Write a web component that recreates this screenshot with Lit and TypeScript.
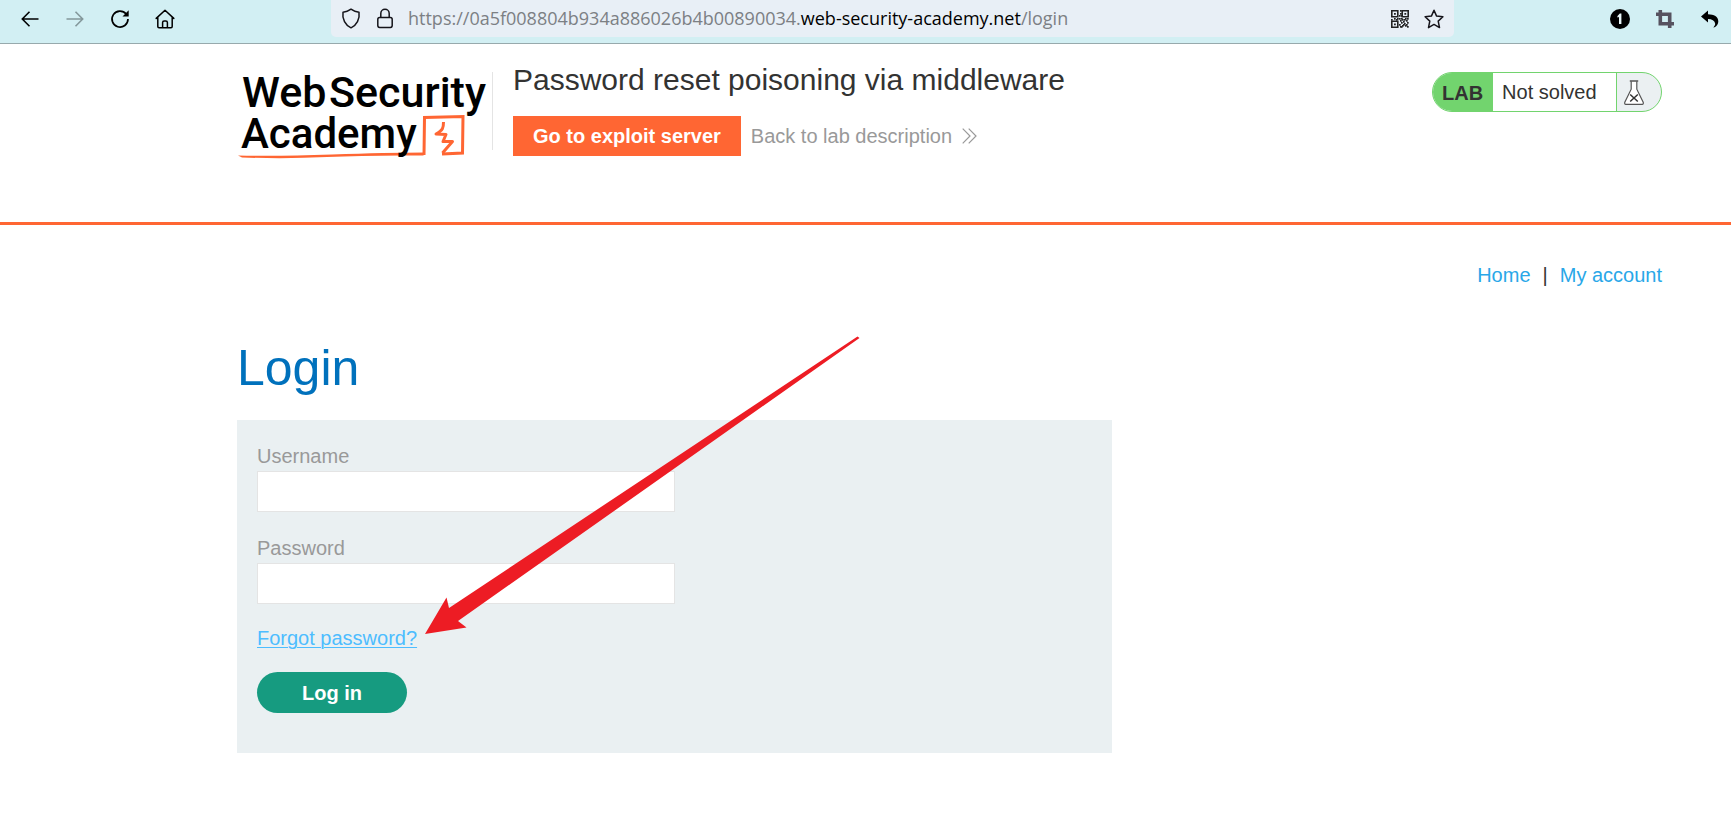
import { LitElement, html, css, svg } from "lit";
import { customElement } from "lit/decorators.js";

@customElement("browser-toolbar")
export class BrowserToolbar extends LitElement {
  static styles = css`
    :host {
      display: block;
      font-family: "Open Sans", "Noto Sans", sans-serif;
    }
    .bar {
      display: flex;
      align-items: flex-start;
      justify-content: space-between;
      gap: 150px;
      height: 43px;
      padding: 0 5px 0 14px;
      background: #d2eff3;
      border-bottom: 1px solid #97a9ac;
    }
    .group {
      display: flex;
      gap: 13px;
    }
    .tool {
      display: grid;
      place-items: center;
      width: 32px;
      height: 37px;
      padding: 0;
      border: 0;
      background: none;
      color: #000;
    }
    .tool:disabled {
      color: #84989b;
    }
    .address {
      flex: 1;
      min-width: 0;
      display: flex;
      align-items: center;
      gap: 13px;
      height: 37px;
      padding: 0 10px 0 9px;
      box-sizing: border-box;
      border-radius: 0 0 5px 5px;
      background: #e8eff6;
    }
    .mini {
      display: grid;
      place-items: center;
      flex: none;
      width: 21px;
      height: 37px;
      padding: 0;
      border: 0;
      background: none;
      color: #15141a;
    }
    .url {
      flex: 1;
      min-width: 0;
      overflow: hidden;
      white-space: nowrap;
      font-size: 18px;
      line-height: 37px;
      color: #7c8084;
    }
    .host {
      color: #000;
    }
  `;

  private qr() {
    const dots = [
      [9, 0], [9, 3], [10, 5], [8, 5], [0, 9], [3, 8], [6, 8], [8, 8], [10, 8], [13, 9], [16, 8],
      [9, 10], [12, 11], [15, 10], [10, 12], [13, 13], [16, 12], [8, 14], [11, 15], [14, 15], [16, 16], [9, 16],
      [5, 9], [11, 9], [14, 8], [12, 14], [10, 16], [15, 14],
    ];
    return html`<svg width="18" height="18" viewBox="0 0 18 18" fill="none" stroke="#222" stroke-width="1.6">
      <path d="M.8.8h6v6h-6zM11.2.8h6v6h-6zM.8 11.2h6v6h-6z" />
      <path d="M3 3h1.8v1.8H3zM13.4 3h1.8v1.8h-1.8zM3 13.4h1.8v1.8H3z" fill="#222" stroke="none" />
      ${dots.map(([x, y]) => svg`<rect x=${x} y=${y} width="1.7" height="1.7" fill="#222" stroke="none" />`)}
    </svg>`;
  }

  render() {
    return html`
      <div class="bar">
        <nav class="group" aria-label="Navigation">
          <button class="tool" aria-label="Back">
            <svg width="18" height="18" viewBox="0 0 18 18" fill="none" stroke="currentColor" stroke-width="1.6">
              <path d="M17.5 9H1.5M8.5 1.8L1.3 9l7.2 7.2" />
            </svg>
          </button>
          <button class="tool" aria-label="Forward" disabled>
            <svg width="18" height="18" viewBox="0 0 18 18" fill="none" stroke="currentColor" stroke-width="1.6">
              <path d="M.5 9h16M9.5 1.8L16.7 9l-7.2 7.2" />
            </svg>
          </button>
          <button class="tool" aria-label="Reload">
            <svg width="20" height="20" viewBox="0 0 20 20" fill="none" stroke="currentColor" stroke-width="1.7">
              <path d="M16.2 5A8 8 0 1 0 18 10" />
              <path d="M18.7 1.2v6.2h-6.2z" fill="currentColor" stroke="none" />
            </svg>
          </button>
          <button class="tool" aria-label="Home">
            <svg width="20" height="20" viewBox="0 0 20 20" fill="none" stroke="currentColor" stroke-width="1.5" stroke-linejoin="round" stroke-linecap="round">
              <path d="M1.2 9.4L10 1.2l8.8 8.2M2.8 8.4v9.2q0 1.2 1.2 1.2h12q1.2 0 1.2-1.2V8.4M7.6 18.5v-5q0-1.6 1.6-1.6h1.6q1.6 0 1.6 1.6v5" />
            </svg>
          </button>
        </nav>
        <div class="address">
          <button class="mini" aria-label="Tracking protection">
            <svg width="20" height="21" viewBox="0 0 20 21" fill="none" stroke="currentColor" stroke-width="1.5" stroke-linejoin="round">
              <path d="M10 1.2Q13.5 3.8 18 4.2Q18.8 9 16.5 13.6Q14.5 17.6 10 19.8Q5.500 17.600 3.500 13.600Q1.200 9 2 4.200Q6.500 3.800 10 1.200z" />
            </svg>
          </button>
          <button class="mini" aria-label="Connection secure">
            <svg width="18" height="21" viewBox="0 0 18 21" fill="none" stroke="currentColor" stroke-width="1.5">
              <rect x="1.8" y="9.6" width="14.400" height="9.800" rx="1.800" />
              <path d="M4.800 9.600V5.500a4.200 4.200 0 0 1 8.400 0v4.100" />
            </svg>
          </button>
          <div class="url">https://0a5f008804b934a886026b4b00890034.<span class="host">web-security-academy.net</span>/login</div>
          <button class="mini" aria-label="QR code">${this.qr()}</button>
          <button class="mini" aria-label="Bookmark">
            <svg width="20" height="20" viewBox="0 0 20 20" fill="none" stroke="currentColor" stroke-width="1.500" stroke-linejoin="round">
              <path d="M10 1.200l2.600 5.900 6.300.7-4.700 4.300 1.300 6.500L10 15.400l-5.500 3.200 1.300-6.500L1.100 7.800l6.300-.7z" />
            </svg>
          </button>
        </div>
        <div class="group">
          <button class="tool" aria-label="1Password">
            <svg width="20" height="20" viewBox="0 0 20 20">
              <circle cx="10" cy="10" r="10" fill="#000" />
              <path d="M7.300 7.200L9.800 4.600h1.600V15H9V7.800l-1.200.9z" fill="#e8f6f8" />
            </svg>
          </button>
          <button class="tool" aria-label="Crop">
            <svg width="18" height="18" viewBox="0 0 18 18" fill="none" stroke="#56525f" stroke-width="3.600">
              <path d="M0 4.300h13.700V18M4.300 0v13.700H18" />
            </svg>
          </button>
          <button class="tool" aria-label="Undo">
            <svg width="18" height="18" viewBox="0 0 18 18">
              <path d="M0 6.500L7 .6v3.700c6 .1 10.300 2.200 10.300 7.200 0 2.600-1.500 4.800-4.300 6-.5.200-.7-.1-.3-.5 1-1.200 1.700-2.400 1.400-3.700C13.600 10.500 11 9 7 8.900v3.700z" fill="#000" />
            </svg>
          </button>
        </div>
      </div>
    `;
  }
}

@customElement("lab-header")
export class LabHeader extends LitElement {
  static styles = css`
    :host {
      display: block;
      border-bottom: 3px solid #ff6633;
      font-size: 20px;
      line-height: 24px;
    }
    .inner {
      display: flex;
      align-items: flex-start;
      padding: 18px 69px 66px 237px;
    }
    .brand {
      flex: none;
      display: block;
      margin-top: 10px;
      height: 78px;
      border-right: 1px solid #e4e4e4;
      color: #000;
    }
    .logo {
      display: block;
      overflow: visible;
      font-family: Roboto, "Liberation Sans", sans-serif;
      font-size: 43px;
      font-weight: 500;
    }
    .info {
      flex: 1;
      padding-left: 20px;
    }
    h2 {
      margin: 0 0 18px;
      font-size: 30px;
      line-height: 36px;
      font-weight: 400;
    }
    .actions {
      display: flex;
      align-items: center;
      gap: 10px;
    }
    .server {
      padding: 8px 20px;
      background: #ff6633;
      color: #fff;
      font-weight: 700;
      text-decoration: none;
    }
    .back {
      display: flex;
      align-items: center;
      gap: 10px;
      color: #999;
      text-decoration: none;
    }
    .status {
      flex: none;
      display: flex;
      align-items: stretch;
      width: 230px;
      height: 40px;
      margin-top: 10px;
      box-sizing: border-box;
      overflow: hidden;
      border: 1px solid #72d46e;
      border-radius: 20px;
      background: #ebf0f2;
    }
    .tag {
      padding: 8px 10px 6px 9px;
      background: #72d46e;
      font-weight: 700;
    }
    .state {
      flex: 1;
      padding: 7px 9px;
      background: #fff;
      border-right: 1px solid #72d46e;
    }
    .flask {
      width: 37px;
      padding: 7px 0 0 7px;
    }
  `;

  render() {
    return html`
      <header class="inner">
        <a class="brand" href="#" aria-label="Web Security Academy">
          <svg class="logo" width="255" height="88" viewBox="0 0 255 88">
            <g fill="none" stroke="#ff6633" stroke-width="3">
              <path d="M187 83L187.500 45.500L226 44.500L225.500 81L205 82" />
              <path d="M206.500 50C206.500 56 206 58 199 62L209 62.500L206 69.500L215.500 69.500L205.500 81" stroke-linejoin="round" />
            </g>
            <path d="M1 83.500Q40 84.500 95 82.500T187 80.500L186.500 83.500Q130 83 90 85T5 85.500z" fill="#ff6633" />
            <text x="5" y="35">Web</text>
            <text x="92" y="35">Security</text>
            <text x="4" y="76" font-size="42">Academy</text>
          </svg>
        </a>
        <div class="info">
          <h2>Password reset poisoning via middleware</h2>
          <div class="actions">
            <a class="server" href="#">Go to exploit server</a>
            <a class="back" href="#">
              Back to lab description
              <svg width="15" height="16" viewBox="0 0 15 16" fill="none" stroke="#999" stroke-width="1.200">
                <path d="M.7.7L8 8 .7 15.300M6.700.7L14 8l-7.300 7.300" />
              </svg>
            </a>
          </div>
        </div>
        <div class="status">
          <span class="tag">LAB</span>
          <span class="state">Not solved</span>
          <span class="flask">
            <svg width="20" height="25" viewBox="0 0 20 25" fill="#fff" stroke="#555" stroke-width="1.200">
              <path d="M7.200 1.200v8L.8 22.200q-.5 2 1 2.200h16.400q1.500-.2 1-2.200L12.800 9.200v-8" />
              <path d="M5.800 1h8.400" stroke-width="1.600" />
              <path d="M6.200 14.500l7.600 7M13.800 14.500l-7.600 7" stroke="#333" stroke-width="1.500" />
            </svg>
          </span>
        </div>
      </header>
    `;
  }
}

@customElement("login-page")
export class LoginPage extends LitElement {
  static styles = css`
    :host {
      display: block;
      padding: 38px 69px 79px 237px;
      font-size: 20px;
      line-height: 24px;
    }
    .links {
      display: flex;
      justify-content: flex-end;
      gap: 12px;
    }
    .links a {
      color: #29a7e8;
      text-decoration: none;
    }
    h1 {
      margin: 51px 0 22px;
      font-size: 50px;
      line-height: 60px;
      font-weight: 400;
      color: #0071bc;
    }
    .card {
      position: relative;
      display: flex;
      flex-direction: column;
      align-items: flex-start;
      max-width: 875px;
      box-sizing: border-box;
      padding: 24px 20px 40px;
      background: #eaf0f2;
    }
    label {
      margin-bottom: 3px;
      color: #999;
    }
    input {
      width: 50%;
      height: 41px;
      margin-bottom: 24px;
      padding: 0 10px;
      box-sizing: border-box;
      border: 1px solid #e4e4e4;
      background: #fff;
      font: inherit;
    }
    .forgot {
      margin: -2px 0 22px;
      color: #4dbdff;
      text-decoration: underline;
      text-underline-offset: 2px;
      text-decoration-thickness: 1px;
    }
    .submit {
      width: 150px;
      height: 41px;
      padding: 0;
      border: 0;
      border-radius: 21px;
      background: #169b80;
      color: #fff;
      font: inherit;
      font-weight: 700;
    }
    .pointer {
      position: absolute;
      left: 188px;
      top: -84px;
      pointer-events: none;
    }
  `;

  render() {
    return html`
      <nav class="links">
        <a href="#">Home</a>
        <span>|</span>
        <a href="#">My account</a>
      </nav>
      <h1>Login</h1>
      <form class="card">
        <label for="username">Username</label>
        <input id="username" type="text" />
        <label for="password">Password</label>
        <input id="password" type="password" />
        <a class="forgot" href="#">Forgot password?</a>
        <button class="submit" type="button">Log in</button>
        <svg class="pointer" width="435" height="299" viewBox="0 0 435 299" aria-hidden="true">
          <path d="M0 298L21.500 261.500L24 272L432.500 .5L434.500 2L33 285L41.500 291.500z" fill="#ed1c24" />
        </svg>
      </form>
    `;
  }
}

@customElement("app-root")
export class AppRoot extends LitElement {
  static styles = css`
    :host {
      display: block;
      min-height: 100vh;
      background: #fff;
      color: #333332;
      font-family: "Liberation Sans", Arial, sans-serif;
    }
  `;

  render() {
    return html`
      <browser-toolbar></browser-toolbar>
      <lab-header></lab-header>
      <login-page></login-page>
    `;
  }
}
